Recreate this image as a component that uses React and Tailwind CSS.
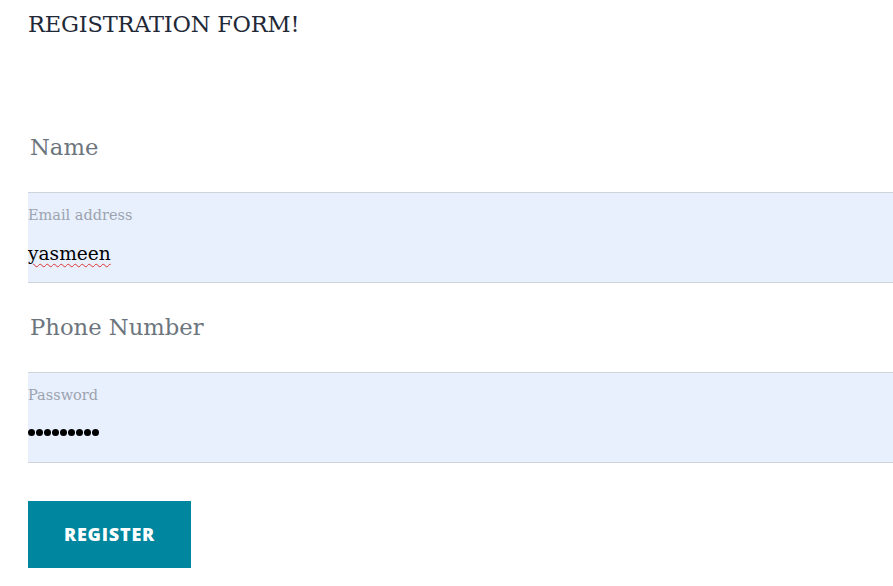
import React from 'react';

const serif = "font-['DejaVu_Serif','Liberation_Serif',serif]";

const PlainField = ({ label, h }) => (
    <div className={`${h} flex items-center pl-[2px]`}>
        <span className={`${serif} text-[22.7px] text-[#6c757d]`}>{label}</span>
    </div>
);

const FilledField = ({ label, children }) => (
    <div className="h-[91px] bg-[#e8f0fe] border-y border-[#ced4da] flex flex-col pt-[12px]">
        <span className={`${serif} text-[14.5px] text-[#9ca3af] leading-[20px]`}>{label}</span>
        <div className="mt-[16px] h-[26px] flex items-center">{children}</div>
    </div>
);

export default function App() {
    return (
        <div className="w-[893px] h-[586px] bg-white overflow-hidden">
            <div className="pl-[28px]">
                <h1 className={`${serif} text-[22.5px] text-[#1f2937] pt-[9px] leading-[30px] tracking-[-0.2px]`}>
                    REGISTRATION FORM!
                </h1>
                <div className="mt-[63px]">
                    <PlainField label="Name" h="h-[90px]" />
                    <FilledField label="Email address">
                        <span className={`${serif} text-[18.6px] text-black underline decoration-wavy decoration-[#d33] decoration-1 underline-offset-[3px]`}>
                            yasmeen
                        </span>
                    </FilledField>
                    <PlainField label="Phone Number" h="h-[89px]" />
                    <FilledField label="Password">
                        <span className="flex gap-[1.5px] -mt-[3px]">
                            {Array.from({ length: 9 }).map((_, i) => (
                                <span key={i} className="w-[6.5px] h-[6.5px] rounded-full bg-black" />
                            ))}
                        </span>
                    </FilledField>
                </div>
                <button className="mt-[38px] w-[163px] h-[67px] bg-[#00869e] text-white font-['Open_Sans',sans-serif] font-extrabold text-[18px] tracking-[0.8px]">
                    REGISTER
                </button>
            </div>
        </div>
    );
}
